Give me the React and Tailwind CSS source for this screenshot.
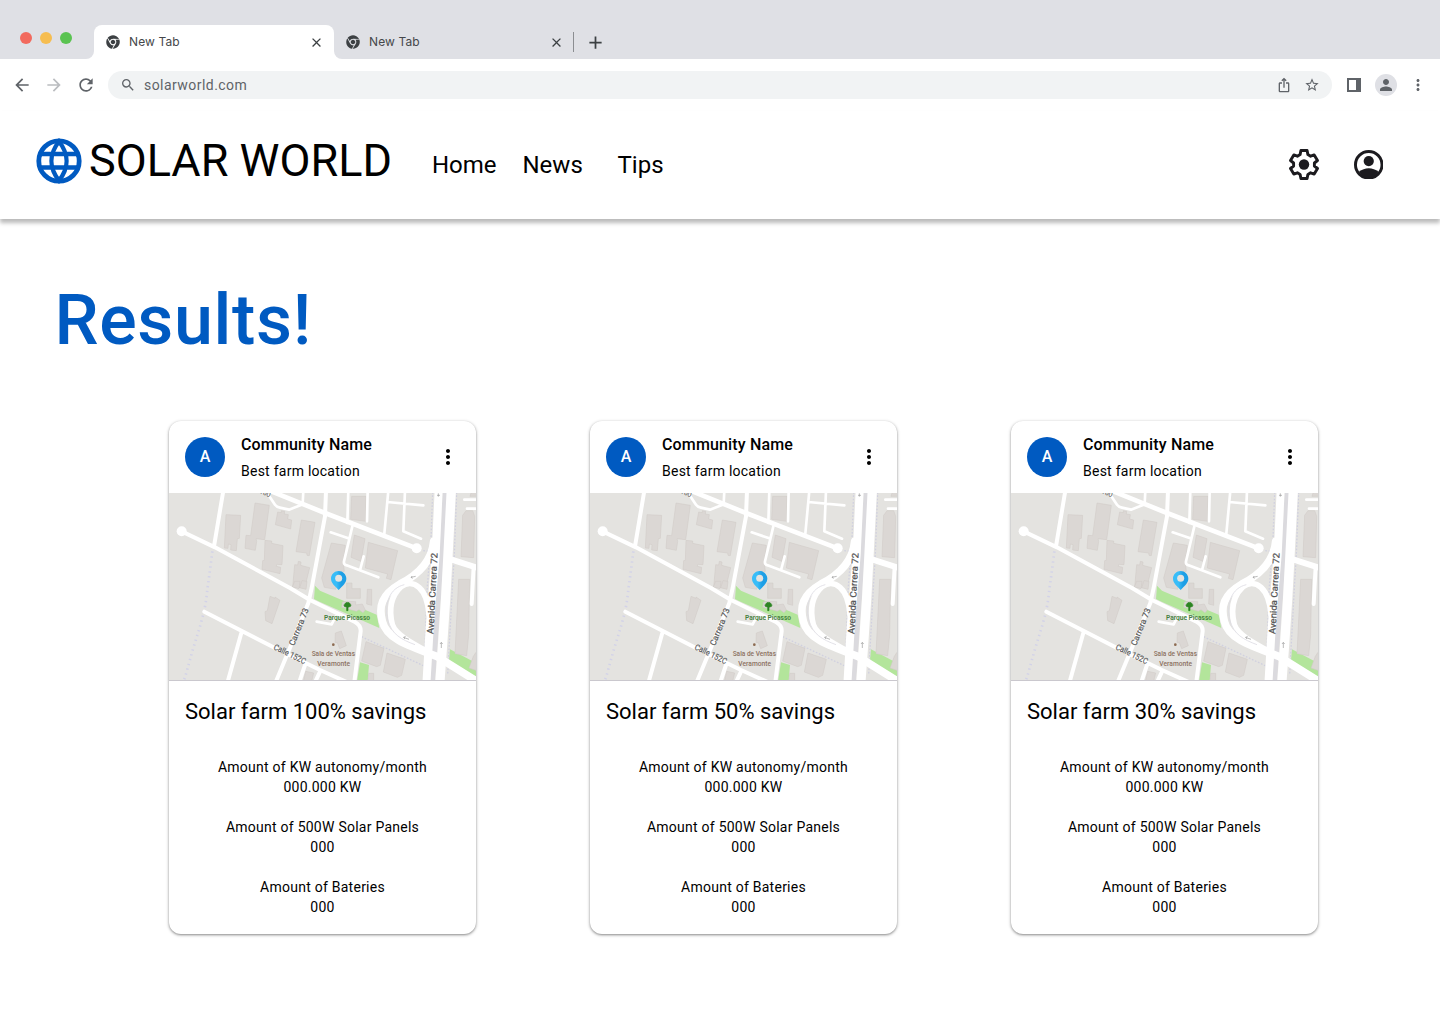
import React from "react";
import { MdArrowBack, MdArrowForward, MdRefresh, MdSearch, MdIosShare, MdStarBorder, MdClose, MdAdd, MdMoreVert, MdPerson } from "react-icons/md";
import { FaChrome } from "react-icons/fa";

const GREY = "#e4e3e0";

function Globe() {
  return (
    <svg width="46" height="46" viewBox="0 0 46 46" fill="none" stroke="#005ac1" strokeWidth="4.8">
      <circle cx="23" cy="23" r="20.2" />
      <path d="M23 3.5C13 16 13 30 23 42.5C33 30 33 16 23 3.5ZM4 16H42M4 29.5H42" strokeWidth="4.4" />
    </svg>
  );
}

function Gear() {
  return (
    <svg width="30" height="31" viewBox="1 0.5 30 31">
      <path
        d="M12.9 2H19.1L19.9 6.1L22.6 7.7L26.2 6.4L29.5 12L26.4 14.5V17.5L29.5 20L26.2 25.6L22.6 24.3L19.9 25.9L19.1 30H12.9L12.1 25.9L9.4 24.3L5.8 25.6L2.5 20L5.6 17.5V14.5L2.5 12L5.8 6.4L9.4 7.7L12.1 6.1Z"
        fill="none" stroke="#1c1b1f" strokeWidth="2.9" strokeLinejoin="round"
      />
      <circle cx="16" cy="16" r="5.2" fill="#1c1b1f" />
    </svg>
  );
}

function Account() {
  return (
    <svg width="29.5" height="29.5" viewBox="0 0 30 30">
      <circle cx="15" cy="15" r="13.5" fill="none" stroke="#1c1b1f" strokeWidth="3" />
      <circle cx="15" cy="11.3" r="5.2" fill="#1c1b1f" />
      <path d="M5 22.2Q9.6 18.5 15 18.5T25 22.2Q21 28.5 15 28.5T5 22.2Z" fill="#1c1b1f" />
    </svg>
  );
}

function MapView() {
  return (
    <svg className="block h-[187px] w-[307px]" viewBox="12 15 921 561" preserveAspectRatio="none">
      <defs>
        <linearGradient id="pin" x1="0" x2="1" y1="0" y2="0">
          <stop offset="0.35" stopColor="#39bdf8" />
          <stop offset="0.65" stopColor="#1d9fe6" />
        </linearGradient>
      </defs>
      <rect x="12" y="12" width="921" height="567" fill={GREY} />
      <g fill="#b3e59b">
        <path d="M450 293L465 308L635 380L643 420L465 342L447 333Z" />
        <path d="M585 523L612 531L608 580H576Z" />
        <path d="M855 484L935 526V578L850 536Z" />
      </g>
      <g fill="#dbd7d4" stroke="#cfc9c5" strokeWidth="1.5">
        <path d="M183 80L227 82L223 151L217 152L214 188L197 186L198 170L190 168L189 181L178 180Z" />
        <path d="M270 45L313 52L299 155L273 152L275 160L271 187L240 181L243 142L257 143Z" />
        <path d="M338 72L349 74V68L359 70L358 78L370 80L368 93L380 96L377 123L331 110Z" />
        <path d="M409 96L450 103L433 203L426 202L425 195L393 191Z" />
        <path d="M300 157L320 159V166L354 173L351 230L335 229L334 235L347 238L345 257L291 244L293 218L298 217Z" />
        <path d="M400 220L408 222L407 232L434 239L419 300L383 297L389 230L398 231Z" />
        <path d="M315 325L330 331V327L345 337L321 407L302 398L300 371L307 368Z" />
        <path d="M389 280H405L402 302L382 297ZM411 278L426 280L423 304L404 299Z" />
        <path d="M560 25H603V100L557 94Z" />
        <path d="M568 141L600 152L588 220L558 208Z" />
        <path d="M610 163L698 188L678 275L664 271L668 258L601 240Z" />
        <path d="M499 165L541 172L535 225L538 250L512 255V304L478 298L470 270Z" />
        <path d="M545 285H561V302H586V331H545Z" />
        <path d="M607 304H620V352L605 348Z" />
        <path d="M532 342L546 340L572 341V351L592 348L601 366L594 374L582 365L574 370L530 358Z" />
        <path d="M511 435L529 429L544 473L524 482L517 464L510 463Z" />
        <path d="M603 461L657 481L646 532L635 536L590 519Z" />
        <path d="M666 495L721 514L710 562L697 568L655 552Z" />
        <path d="M611 556H626V580H609Z" />
        <path d="M422 550L446 555L440 580H415Z" />
        <path d="M903 68H923L929 85L926 209L888 206L893 82Z" />
        <path d="M881 274H914L911 440L905 503L870 497Z" />
        <path d="M935 490L925 505L912 540L935 548Z" />
        <path d="M919 12H935V25H915Z" />
      </g>
      <path d="M142 190C135 250 130 280 124 330S100 430 85 480S64 560 52 590" fill="none" stroke="#d2d2e8" strokeWidth="8" strokeDasharray="4 11" />
      <path d="M803 12L797 180M775 188L795 190M875 12L868 200L862 300L848 560M792 230L786 310L780 480M590 446L775 533" fill="none" stroke="#d0d0df" strokeWidth="4" strokeDasharray="5 5" />
      <path d="M840 12L830 200L815 400L803 580" fill="none" stroke="#dbdade" strokeWidth="14" />
      <g fill="none" stroke="#ffffff" strokeLinejoin="round" strokeLinecap="round">
        <path strokeWidth="12" d="M50 130L150 178L375 300L435 336L525 380L570 402Q588 412 587 430L568 582M175 8L147 175M483 8L480 85L440 300L430 345L370 491L331 585M118 371L330 480L465 546L545 582M230 431L187 585" />
        <path strokeWidth="14" d="M314 8L480 75L755 181" />
        <path strokeWidth="8" d="M310 20L330 50Q335 57 345 59L372 65L410 50M415 8L413 48M550 8L547 105M562 115L537 220Q535 230 545 232L640 268M497 133L550 151M596 205L586 243M608 8L606 100M670 8L658 137M667 42L775 52M720 8L715 130L768 152M898 35H938M906 62H938M455 401L500 409L512 385" />
        <path strokeWidth="12" d="M421 528L402 585M464 553L449 585M926 235L920 348" />
        <path strokeWidth="24" d="M821 5L812 200L802 320L794 420L784 590" />
        <path strokeWidth="28" d="M859 5L849 200L842 330L832 480L824 590" />
        <path strokeWidth="23" d="M806 160C800 225 750 265 705 288C650 320 640 355 652 400C664 450 720 470 815 505L945 586" />
        <path strokeWidth="17" d="M792 380C787 300 745 270 708 296C672 330 672 370 682 410C692 440 740 465 795 495" />
        <path strokeWidth="18" d="M860 215L942 241" />
      </g>
      <path d="M718 290C675 300 657 345 668 395C680 440 710 455 750 470" fill="none" stroke="#dddce3" strokeWidth="2.5" />
      <g fill="#ffffff">
        <circle cx="50" cy="130" r="15" />
        <circle cx="755" cy="181" r="15" />
      </g>
      <g fontFamily="Roboto, sans-serif" fill="#555555" fontSize="25">
        <text transform="translate(805 439) rotate(-87)" fontSize="27" textLength="244" lengthAdjust="spacingAndGlyphs" stroke="#555555" strokeWidth="0.8">Avenida Carrera 72</text>
        <text transform="translate(387 475) rotate(-68)" textLength="119" lengthAdjust="spacingAndGlyphs" stroke="#555555" strokeWidth="0.5">Carrera 73</text>
        <text transform="translate(324 483) rotate(26)" textLength="104" lengthAdjust="spacingAndGlyphs" stroke="#555555" strokeWidth="0.5">Calle 152C</text>
        <text transform="translate(282 16) rotate(20)" fontSize="21" textLength="34" lengthAdjust="spacingAndGlyphs">160</text>
        <text x="477" y="396" fontSize="24" fontWeight="600" fill="#44803d" textLength="138" lengthAdjust="spacingAndGlyphs">Parque Picasso</text>
        <text x="440" y="503" fontSize="24" fontWeight="500" fill="#8c7161" textLength="130" lengthAdjust="spacingAndGlyphs">Sala de Ventas</text>
        <text x="457" y="533" fontSize="24" fontWeight="500" fill="#8c7161" textLength="98" lengthAdjust="spacingAndGlyphs">Veramonte</text>
      </g>
      <circle cx="505" cy="470" r="4" fill="#8c6a50" />
      <path d="M540 347C541 342 554 342 555 347C559 350 558 356 554 356L549 358V368H545V358L541 356C536 356 536 350 540 347Z" fill="#2c8522" stroke="#2c8522" strokeWidth="2" strokeLinejoin="round" />
      <path d="M738 268L752 265M742 264L738 268L743 271M716 448L732 454M722 445L716 448L720 453M829 480V464M825 468L829 463L833 468M820 26V16M816 22H825" fill="none" stroke="#999999" strokeWidth="2" />
      <path d="M521 249C509 249 498 259 498 272C498 285 509 293 521 306C533 293 544 285 544 272C544 259 533 249 521 249Z" fill="url(#pin)" />
      <circle cx="521" cy="271" r="10.5" fill={GREY} />
    </svg>
  );
}

function Stat({ label, value }) {
  return (
    <div>
      <p>{label}</p>
      <p>{value}</p>
    </div>
  );
}

function Card({ savings }) {
  return (
    <article className="h-[513px] w-[307px] overflow-hidden rounded-xl bg-white shadow-[0_1px_3px_1px_rgba(0,0,0,0.15),0_1px_2px_0_rgba(0,0,0,0.3)]">
      <header className="flex h-[72px] items-center pl-4">
        <div className="flex size-10 items-center justify-center rounded-full bg-[#005ac1] text-base font-medium tracking-[0.1px] text-white">A</div>
        <div className="ml-4 flex-1">
          <h2 className="text-base/6 font-medium tracking-[0.15px]">Community Name</h2>
          <p className="mt-1 text-sm/5 tracking-[0.25px]">Best farm location</p>
        </div>
        <MdMoreVert className="mr-4 size-6" />
      </header>
      <MapView />
      <h3 className="border-t border-[#cac8ce] pl-4 pt-[17px] text-[22px]/7">Solar farm {savings}% savings</h3>
      <div className="mt-[31px] flex flex-col gap-5 text-center text-sm/5 tracking-[0.25px]">
        <Stat label="Amount of KW autonomy/month" value="000.000 KW" />
        <Stat label="Amount of 500W Solar Panels" value="000" />
        <Stat label="Amount of Bateries" value="000" />
      </div>
    </article>
  );
}

function TabContent() {
  return (
    <>
      <FaChrome className="size-[14px] text-[#3c4043]" />
      <span className="ml-[9px] flex-1 font-[Inter] text-xs tracking-[0.1px] text-[#45474a]">New Tab</span>
      <MdClose className="size-[15px] text-[#3c4043]" />
    </>
  );
}

function BrowserBar() {
  return (
    <div>
      <div className="flex h-[59px] items-end bg-[#dfe0e5]">
        <div className="mb-[15px] ml-5 flex w-[66px] gap-2">
          <span className="size-3 rounded-full bg-[#f26a5e]" />
          <span className="size-3 rounded-full bg-[#f6bd50]" />
          <span className="size-3 rounded-full bg-[#5ac351]" />
        </div>
        <div className="size-2 bg-white"><div className="size-2 rounded-br-lg bg-[#dfe0e5]" /></div>
        <div className="flex h-[34px] w-[240px] items-center rounded-t-lg bg-white pl-3 pr-[10px]"><TabContent /></div>
        <div className="size-2 bg-white"><div className="size-2 rounded-bl-lg bg-[#dfe0e5]" /></div>
        <div className="flex h-[34px] w-[232px] items-center pl-1 pr-[10px]"><TabContent /></div>
        <div className="-ml-px mb-[7px] h-5 w-px self-end bg-[#8b8d91]" />
        <MdAdd className="mb-[6px] ml-[11px] size-[21px] text-[#3c4043]" />
      </div>
      <div className="flex h-[52px] items-center pl-3 pr-[13px] text-[#5f6368]">
        <MdArrowBack className="size-5" />
        <MdArrowForward className="ml-3 size-5 text-[#bbbdc0]" />
        <MdRefresh className="ml-3 size-5" />
        <div className="ml-3 flex h-7 w-[1224px] shrink-0 items-center rounded-full bg-[#f1f3f4] pl-3 pr-3">
          <MdSearch className="size-4" />
          <span className="ml-2 flex-1 font-[Roboto] text-[14px] tracking-[0.45px]">solarworld.com</span>
          <MdIosShare className="size-4" />
          <MdStarBorder className="ml-3 size-4" />
        </div>
        <div className="ml-[15px] h-[14px] w-[14px] shrink-0 border-2 border-r-[5px] border-[#5f6368]" />
        <div className="ml-[14px] flex size-[22px] shrink-0 items-center justify-center rounded-full bg-[#dfe0e5]"><MdPerson className="size-[18px]" /></div>
        <MdMoreVert className="ml-3 size-[18px] shrink-0" />
      </div>
    </div>
  );
}

export default function App() {
  return (
    <div className="h-[1024px] w-[1440px] overflow-hidden bg-white font-[Roboto] text-black">
      <BrowserBar />
      <header className="flex h-[108px] items-center pb-[9px] shadow-[0_4px_4px_rgba(0,0,0,0.27)]">
        <div className="mb-[-1px] ml-9 flex w-[396px] items-center">
          <Globe />
          <span className="ml-[7px] text-[45px]/[52px]">SOLAR WORLD</span>
        </div>
        <nav className="mt-2 flex flex-1 text-2xl">
          <a className="w-[90.5px]">Home</a>
          <a className="w-[95px]">News</a>
          <a>Tips</a>
        </nav>
        <div className="mr-[57px] mt-2 flex items-center gap-[35px]">
          <Gear />
          <Account />
        </div>
      </header>
      <main>
        <h1 className="ml-[54.5px] mt-[59px] text-[70px]/[84px] font-medium tracking-[0.65px] text-[#005ac1]">Results!</h1>
        <section className="ml-[169px] mt-[59px] flex gap-[114px]">
          <Card savings={100} />
          <Card savings={50} />
          <Card savings={30} />
        </section>
      </main>
    </div>
  );
}
